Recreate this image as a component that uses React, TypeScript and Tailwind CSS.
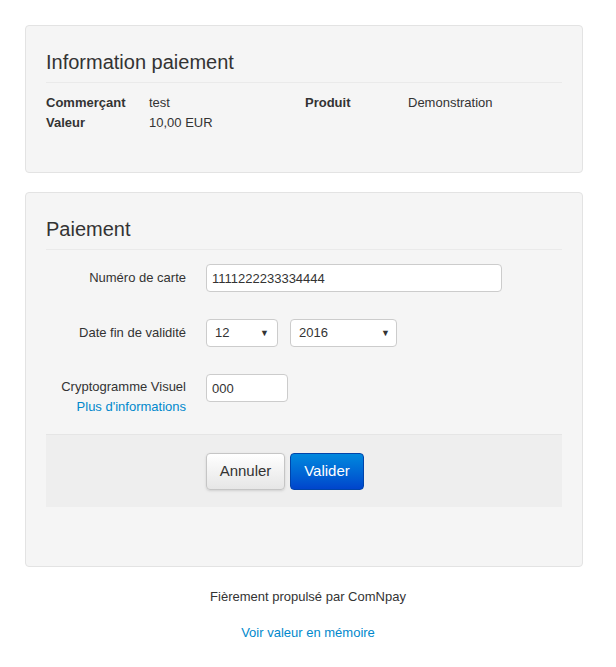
export default function App() {
  return (
    <div className="min-h-[667px] w-[616px] bg-white px-[25px] pt-[25px] text-[13px] leading-[20px] text-[#333]" style={{ fontFamily: '"Liberation Sans", Arial, sans-serif' }}>
      {/* Info panel */}
      <div className="h-[148px] w-[558px] rounded-[4px] border border-[#e3e3e3] bg-[#f5f5f5] px-5 pt-[22px]">
        <h2 className="border-b border-[#eaeaea] pb-[6px] text-[20px] leading-[28px]">Information paiement</h2>
        <div className="mt-[10px] grid grid-cols-[103px_156px_103px_1fr]">
          <b>Commerçant</b><span>test</span><b>Produit</b><span>Demonstration</span>
          <b>Valeur</b><span>10,00 EUR</span>
        </div>
      </div>

      {/* Payment panel */}
      <div className="mt-[19px] h-[375px] w-[558px] rounded-[4px] border border-[#e3e3e3] bg-[#f5f5f5] px-5 pt-[22px]">
        <h2 className="border-b border-[#eaeaea] pb-[6px] text-[20px] leading-[28px]">Paiement</h2>
        <div className="mt-[14px] flex items-center">
          <label className="w-[140px] text-right">Numéro de carte</label>
          <input defaultValue="1111222233334444" className="ml-5 h-[28px] w-[296px] rounded-[4px] border border-[#ccc] bg-white px-[5px] text-[13px] outline-none" />
        </div>
        <div className="mt-[27px] flex items-center">
          <label className="w-[140px] text-right">Date fin de validité</label>
          <div className="ml-5 flex h-[28px] w-[72px] items-center justify-between rounded-[4px] border border-[#ccc] bg-white pl-[8px] pr-[8px]">
            <span>12</span><span className="text-[9px]">▼</span>
          </div>
          <div className="ml-[12px] flex h-[28px] w-[107px] items-center justify-between rounded-[4px] border border-[#ccc] bg-white pl-[8px] pr-[6px]">
            <span>2016</span><span className="text-[9px]">▼</span>
          </div>
        </div>
        <div className="mt-[27px] flex items-start">
          <div className="w-[140px] pt-[3px] text-right">
            <div>Cryptogramme Visuel</div>
            <a className="text-[#0088cc]">Plus d'informations</a>
          </div>
          <input defaultValue="000" className="ml-5 h-[28px] w-[82px] rounded-[4px] border border-[#ccc] bg-white px-[5px] text-[13px] outline-none" />
        </div>
        <div className="mt-[17px] flex h-[73px] items-center gap-[5px] border-t border-[#e5e5e5] bg-[#eeeeee] pl-[160px]">
          <button className="h-[37px] w-[79px] rounded-[4px] border border-[#c5c5c5] bg-gradient-to-b from-white to-[#e6e6e6] text-[15px] text-[#333] shadow-sm">Annuler</button>
          <button className="h-[37px] w-[74px] rounded-[4px] border border-[#0044aa] bg-gradient-to-b from-[#0088dd] to-[#0044cc] text-[15px] text-white">Valider</button>
        </div>
      </div>

      <p className="mt-[20px] text-center">Fièrement propulsé par ComNpay</p>
      <p className="mt-[16px] text-center"><a className="text-[#0088cc]">Voir valeur en mémoire</a></p>
    </div>
  );
}
